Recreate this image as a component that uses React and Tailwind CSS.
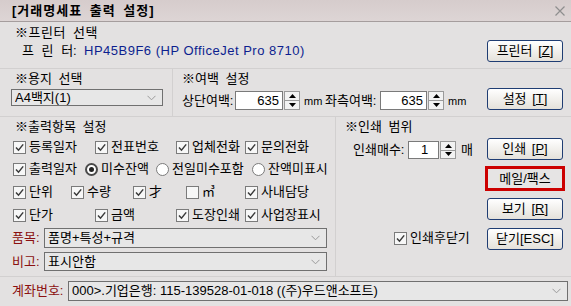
import React from "react";

function Check({ checked = true }) {
  return (
    <span className="w-[13px] h-[13px] border border-[#7b7b7b] bg-[#f7f7f7] flex items-center justify-center shrink-0">
      {checked && (
        <svg width="11" height="11" viewBox="0 0 11 11">
          <path d="M2 5.5 L4.5 8.2 L9.2 2.4" fill="none" stroke="#3a3a3a" strokeWidth="1.5" />
        </svg>
      )}
    </span>
  );
}

function Radio({ checked }) {
  return (
    <span
      className={
        checked
          ? "w-[13px] h-[13px] rounded-full border-2 border-[#4a4a4a] bg-white flex items-center justify-center shrink-0"
          : "w-[13px] h-[13px] rounded-full border border-[#7b7b7b] bg-white flex items-center justify-center shrink-0"
      }
    >
      {checked && <span className="w-[5px] h-[5px] rounded-full bg-[#222]" />}
    </span>
  );
}

function CItem({ label, w, checked = true }) {
  return (
    <div className={"flex items-center gap-[3px] shrink-0 " + w}>
      <Check checked={checked} />
      <span className="whitespace-nowrap">{label}</span>
    </div>
  );
}

function RItem({ label, w, checked = false }) {
  return (
    <div className={"flex items-center gap-[3px] shrink-0 " + w}>
      <Radio checked={checked} />
      <span className="whitespace-nowrap">{label}</span>
    </div>
  );
}

function Chevron() {
  return (
    <svg width="9" height="6" viewBox="0 0 9 6" className="shrink-0">
      <path d="M0.5 0.8 L4.5 4.8 L8.5 0.8" fill="none" stroke="#9a9a9a" strokeWidth="1" />
    </svg>
  );
}

function Select({ className, children }) {
  return (
    <div className={"border border-[#707070] bg-[#e7e7e7] flex items-center pl-[3px] pr-[6px] " + className}>
      <span className="flex-1 whitespace-nowrap overflow-hidden">{children}</span>
      <Chevron />
    </div>
  );
}

function Spin({ h }) {
  return (
    <div className={"flex flex-col w-[16px] ml-[1px] shrink-0 " + h}>
      <div className="flex-1 border border-[#9a9a9a] bg-[#f2f2f2] flex items-center justify-center">
        <svg width="7" height="4" viewBox="0 0 7 4">
          <path d="M0 4 L3.5 0 L7 4Z" fill="#000" />
        </svg>
      </div>
      <div className="flex-1 border border-t-0 border-[#9a9a9a] bg-[#f2f2f2] flex items-center justify-center">
        <svg width="7" height="4" viewBox="0 0 7 4">
          <path d="M0 0 L3.5 4 L7 0Z" fill="#000" />
        </svg>
      </div>
    </div>
  );
}

function Btn({ children, className = "" }) {
  return (
    <div
      className={
        "w-[76px] h-[22px] rounded-[3px] border border-[#1f3d73] bg-gradient-to-b from-[#ffffff] to-[#e4e1da] flex items-center justify-center whitespace-nowrap [word-spacing:2px] " +
        className
      }
    >
      {children}
    </div>
  );
}

export default function App() {
  return (
    <div className="w-[571px] h-[306px] overflow-hidden bg-[#e3e1e1] text-black text-[13px] leading-[16px] flex flex-col font-[family-name:Liberation_Sans,Noto_Sans_CJK_KR,sans-serif]">
      {/* Title bar */}
      <div className="h-[22px] shrink-0 bg-gradient-to-b from-[#d6cccc] to-[#ddd5d5] border-b border-[#a59d9d] flex items-center pl-[12px] pr-[5px]">
        <span className="font-bold flex-1 tracking-[1px] [word-spacing:3px]">[거래명세표 출력 설정]</span>
        <svg width="12" height="12" viewBox="0 0 12 12">
          <path d="M1.5 1.5 L10.5 10.5 M10.5 1.5 L1.5 10.5" stroke="#8e8e8e" strokeWidth="1.2" />
        </svg>
      </div>

      {/* Printer section */}
      <div className="h-[47px] shrink-0 flex border-b border-[#d2d0d0]">
        <div className="flex-1 pl-[15px] pt-[3px]">
          <div className="h-[16px] tracking-[0.5px] [word-spacing:3px]">※프린터 선택</div>
          <div className="mt-[2px] pl-[7px] flex h-[16px] items-center">
            <span className="w-[62px] whitespace-nowrap [word-spacing:4px]">프 린 터:</span>
            <span className="text-[#0d1f8f] text-[13px] tracking-[0.5px] whitespace-nowrap">HP45B9F6 (HP OfficeJet Pro 8710)</span>
          </div>
        </div>
        <div className="pt-[18px] pr-[8px]">
          <Btn>
            프린터 [<span className="underline">Z</span>]
          </Btn>
        </div>
      </div>

      {/* Paper / margin section */}
      <div className="h-[48px] shrink-0 flex border-b border-[#d2d0d0]">
        <div className="w-[173px] shrink-0 border-r border-[#d2d0d0] pt-[2px]">
          <div className="pl-[15px] h-[16px] [word-spacing:3px]">※용지 선택</div>
          <Select className="ml-[11px] mt-[2px] w-[152px] h-[17px]">A4백지(1)</Select>
        </div>
        <div className="flex-1 pl-[9px] pt-[2px]">
          <div className="h-[16px] [word-spacing:3px]">※여백 설정</div>
          <div className="flex items-center mt-[4px] h-[19px]">
            <span className="w-[53px] whitespace-nowrap">상단여백:</span>
            <div className="w-[48px] h-[19px] bg-white border border-[#7a7a7a] text-right pr-[3px] leading-[17px]">635</div>
            <Spin h="h-[19px]" />
            <span className="ml-[4px] text-[11px] w-[19px]">mm</span>
            <span className="ml-[2px] w-[55px] whitespace-nowrap">좌측여백:</span>
            <div className="w-[47px] h-[19px] bg-white border border-[#7a7a7a] text-right pr-[3px] leading-[17px]">635</div>
            <Spin h="h-[19px]" />
            <span className="ml-[4px] text-[11px]">mm</span>
          </div>
        </div>
        <div className="pt-[19px] pr-[8px]">
          <Btn>
            설정 [<span className="underline">T</span>]
          </Btn>
        </div>
      </div>

      {/* Output section */}
      <div className="h-[160px] shrink-0 flex border-b border-[#d2d0d0]">
        <div className="w-[336px] shrink-0 border-r border-[#d2d0d0] pt-[2px]">
          <div className="pl-[15px] h-[16px] [word-spacing:3px]">※출력항목 설정</div>
          <div className="flex items-center h-[20px] mt-[2px] pl-[13px]">
            <CItem label="등록일자" w="w-[82px]" />
            <CItem label="전표번호" w="w-[81px]" />
            <CItem label="업체전화" w="w-[69px]" />
            <CItem label="문의전화" w="w-[70px]" />
          </div>
          <div className="flex items-center h-[20px] mt-[2px] pl-[13px]">
            <CItem label="출력일자" w="w-[72px]" />
            <RItem label="미수잔액" w="w-[71px]" checked />
            <RItem label="전일미수포함" w="w-[96px]" />
            <RItem label="잔액미표시" w="w-[76px]" />
          </div>
          <div className="flex items-center h-[20px] mt-[3px] pl-[13px]">
            <CItem label="단위" w="w-[58px]" />
            <CItem label="수량" w="w-[62px]" />
            <CItem label="才" w="w-[53px]" />
            <CItem label="㎥" w="w-[59px]" checked={false} />
            <CItem label="사내담당" w="w-[70px]" />
          </div>
          <div className="flex items-center h-[20px] mt-[3px] pl-[13px]">
            <CItem label="단가" w="w-[82px]" />
            <CItem label="금액" w="w-[81px]" />
            <CItem label="도장인쇄" w="w-[69px]" />
            <CItem label="사업장표시" w="w-[76px]" />
          </div>
          <div className="flex items-center h-[20px] mt-[3px] pl-[12px]">
            <span className="w-[32px] text-[#8b1010] whitespace-nowrap">품목:</span>
            <Select className="w-[283px] h-[20px]">품명+특성+규격</Select>
          </div>
          <div className="flex items-center h-[19px] mt-[4px] pl-[12px]">
            <span className="w-[32px] text-[#8b1010] whitespace-nowrap">비고:</span>
            <Select className="w-[283px] h-[19px]">표시안함</Select>
          </div>
        </div>

        <div className="flex-1 pt-[2px] pl-[9px] flex flex-col">
          <div className="h-[16px] [word-spacing:3px]">※인쇄 범위</div>
          <div className="flex items-center mt-[6px] pl-[8px] h-[18px]">
            <span className="w-[55px] whitespace-nowrap">인쇄매수:</span>
            <div className="w-[31px] h-[18px] bg-white border border-[#7a7a7a] pl-[12px] leading-[16px]">1</div>
            <Spin h="h-[18px]" />
            <span className="ml-[5px]">매</span>
          </div>
          <div className="flex items-center mt-[71px] pl-[49px] h-[16px]">
            <CItem label="인쇄후닫기" w="w-[80px]" />
          </div>
        </div>

        <div className="pr-[8px] pt-[21px] flex flex-col">
          <Btn>
            인쇄 [<span className="underline">P</span>]
          </Btn>
          <div className="mt-[6px] -mx-[2px] h-[25px] border-[3px] border-[#cc0000] bg-[#e6e4e4] flex items-center justify-center">
            메일/팩스
          </div>
          <Btn className="mt-[7px]">
            보기 [<span className="underline">R</span>]
          </Btn>
          <Btn className="mt-[8px]">닫기[ESC]</Btn>
        </div>
      </div>

      {/* Account section */}
      <div className="flex-1 flex items-start pt-[4px] pl-[12px]">
        <span className="w-[56px] h-[20px] flex items-center text-[#8b1010] whitespace-nowrap">계좌번호:</span>
        <Select className="w-[500px] h-[20px]">000&gt;.기업은행: 115-139528-01-018 ((주)우드앤소프트)</Select>
      </div>
    </div>
  );
}
